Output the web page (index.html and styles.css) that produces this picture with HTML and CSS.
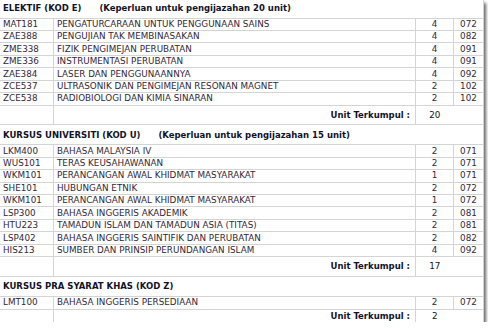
FILE: index.html
```html
<!DOCTYPE html>
<html>
<head>
<meta charset="utf-8">
<link rel="stylesheet" href="styles.css">
</head>
<body>
<div class="shot">
<table class="courses">
  <colgroup><col class="c-code"><col class="c-name"><col class="c-unit"><col class="c-kod"></colgroup>
  <tr class="head first"><td colspan="4"><b>ELEKTIF (KOD E)</b><b class="req">(Keperluan untuk pengijazahan 20 unit)</b></td></tr>
  <tr class="row"><td>MAT181</td><td>PENGATURCARAAN UNTUK PENGGUNAAN SAINS</td><td class="n">4</td><td class="n">072</td></tr>
  <tr class="row"><td>ZAE388</td><td>PENGUJIAN TAK MEMBINASAKAN</td><td class="n">4</td><td class="n">082</td></tr>
  <tr class="row"><td>ZME338</td><td>FIZIK PENGIMEJAN PERUBATAN</td><td class="n">4</td><td class="n">091</td></tr>
  <tr class="row"><td>ZME336</td><td>INSTRUMENTASI PERUBATAN</td><td class="n">4</td><td class="n">091</td></tr>
  <tr class="row"><td>ZAE384</td><td>LASER DAN PENGGUNAANNYA</td><td class="n">4</td><td class="n">092</td></tr>
  <tr class="row"><td>ZCE537</td><td>ULTRASONIK DAN PENGIMEJAN RESONAN MAGNET</td><td class="n">2</td><td class="n">102</td></tr>
  <tr class="row"><td>ZCE538</td><td>RADIOBIOLOGI DAN KIMIA SINARAN</td><td class="n">2</td><td class="n">102</td></tr>
  <tr class="total"><td></td><td class="lbl">Unit Terkumpul :</td><td class="n">20</td><td class="blank"></td></tr>

  <tr class="head"><td colspan="4"><b>KURSUS UNIVERSITI (KOD U)</b><b class="req">(Keperluan untuk pengijazahan 15 unit)</b></td></tr>
  <tr class="row"><td>LKM400</td><td>BAHASA MALAYSIA IV</td><td class="n">2</td><td class="n">071</td></tr>
  <tr class="row"><td>WUS101</td><td>TERAS KEUSAHAWANAN</td><td class="n">2</td><td class="n">071</td></tr>
  <tr class="row"><td>WKM101</td><td>PERANCANGAN AWAL KHIDMAT MASYARAKAT</td><td class="n">1</td><td class="n">071</td></tr>
  <tr class="row"><td>SHE101</td><td>HUBUNGAN ETNIK</td><td class="n">2</td><td class="n">072</td></tr>
  <tr class="row"><td>WKM101</td><td>PERANCANGAN AWAL KHIDMAT MASYARAKAT</td><td class="n">1</td><td class="n">072</td></tr>
  <tr class="row"><td>LSP300</td><td>BAHASA INGGERIS AKADEMIK</td><td class="n">2</td><td class="n">081</td></tr>
  <tr class="row"><td>HTU223</td><td>TAMADUN ISLAM DAN TAMADUN ASIA (TITAS)</td><td class="n">2</td><td class="n">081</td></tr>
  <tr class="row"><td>LSP402</td><td>BAHASA INGGERIS SAINTIFIK DAN PERUBATAN</td><td class="n">2</td><td class="n">082</td></tr>
  <tr class="row"><td>HIS213</td><td>SUMBER DAN PRINSIP PERUNDANGAN ISLAM</td><td class="n">4</td><td class="n">092</td></tr>
  <tr class="total"><td></td><td class="lbl">Unit Terkumpul :</td><td class="n">17</td><td class="blank"></td></tr>

  <tr class="head"><td colspan="4"><b>KURSUS PRA SYARAT KHAS (KOD Z)</b></td></tr>
  <tr class="row last"><td>LMT100</td><td>BAHASA INGGERIS PERSEDIAAN</td><td class="n">2</td><td class="n">072</td></tr>
  <tr class="total end"><td></td><td class="lbl">Unit Terkumpul :</td><td class="n">2</td><td class="blank"></td></tr>
</table>
</div>
</body>
</html>
```

FILE: styles.css
```css
html, body {
  margin: 0;
  padding: 0;
  background: #ffffff;
}

.shot {
  width: 484px;
  height: 322px;
  overflow: hidden;
  background: #ffffff;
  box-shadow: 2px 3px 3px rgba(0, 0, 0, 0.6);
}

.courses {
  border-collapse: collapse;
  table-layout: fixed;
  width: 484px;
  margin: -2px 0 0 -1px;
  font-family: "DejaVu Sans", Verdana, sans-serif;
  font-size: 8.8px;
  line-height: 1;
  color: #33283a;
}

.c-code { width: 54px; }
.c-name { width: 362px; }
.c-unit { width: 38px; }
.c-kod { width: 30px; }

.courses td {
  border: 1px solid #d4d4d4;
  padding: 0 3px;
  white-space: nowrap;
  overflow: hidden;
  vertical-align: middle;
}

.row { height: 12.45px; }
.row.last { height: 13px; }

.head { height: 20px; }
.head.first { height: 19.5px; }
.head td {
  padding-left: 3px;
  color: #121228;
  font-size: 8.5px;
}
.req { margin-left: 18px; }

.total { height: 19.7px; }
.total.end { height: 14px; }
.total td { color: #121228; }
.total .lbl {
  text-align: right;
  font-weight: bold;
  font-size: 8.5px;
  padding-right: 5px;
}
.total .blank { border-left-style: hidden; }

.n { text-align: center; }
```
